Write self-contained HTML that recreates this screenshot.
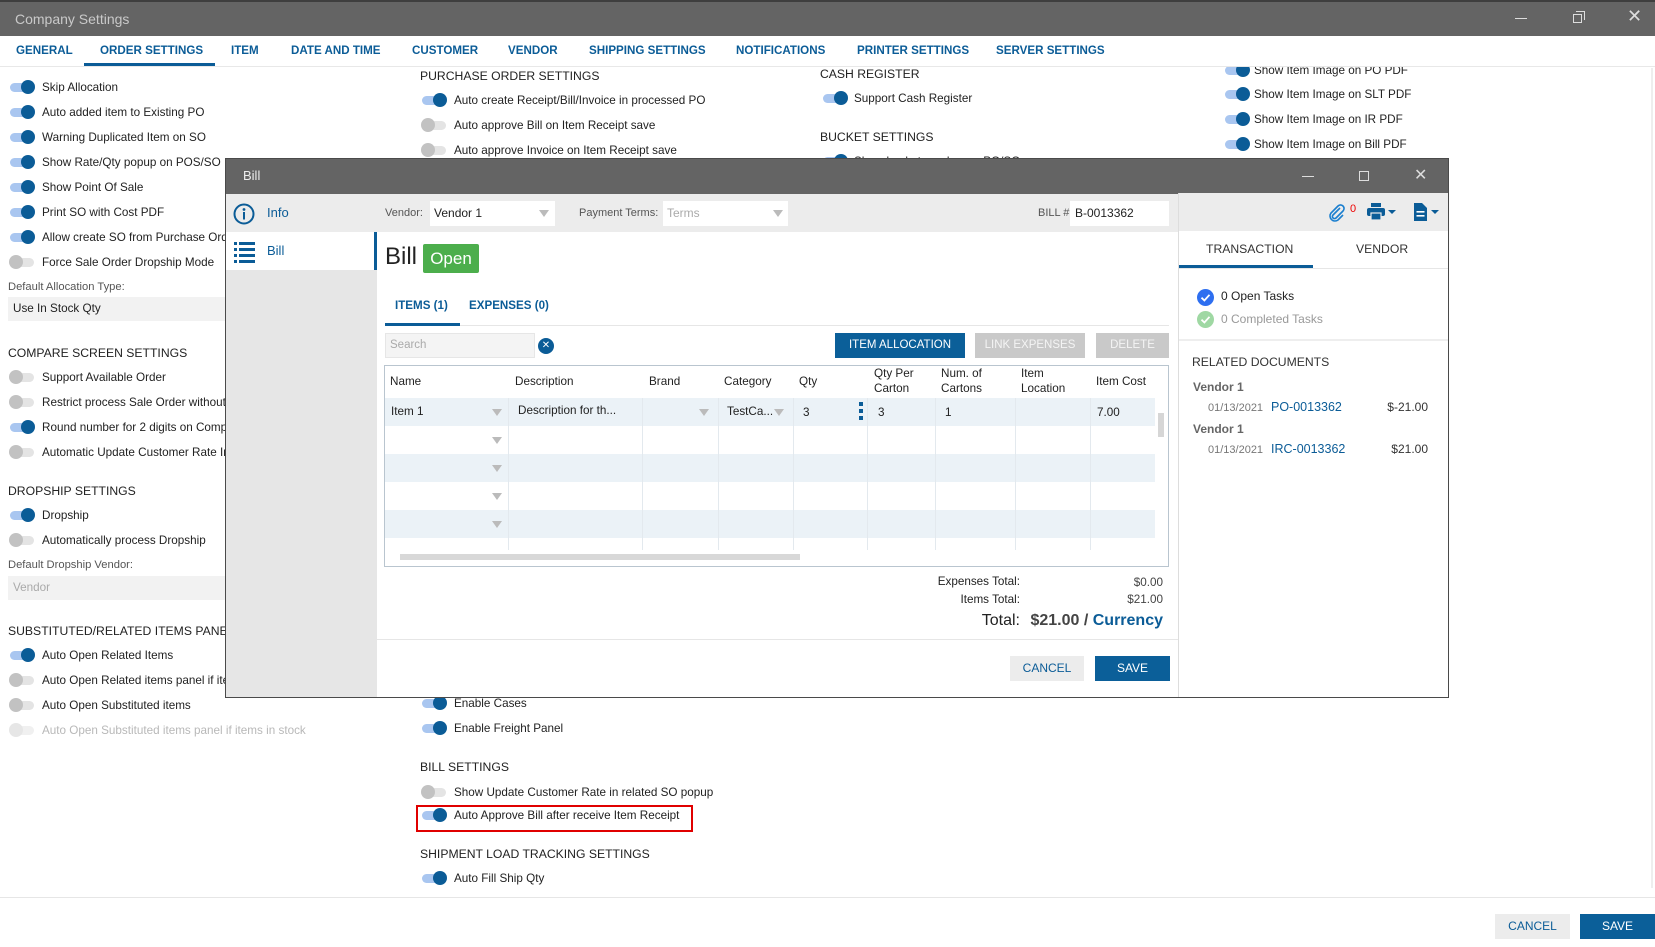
<!DOCTYPE html>
<html><head><meta charset="utf-8"><style>
*{box-sizing:border-box;margin:0;padding:0}
body{width:1655px;height:947px;position:relative;overflow:hidden;background:#fff;font-family:"Liberation Sans",sans-serif;font-size:12px;color:#222}
.a{position:absolute;white-space:nowrap}
.tg{position:absolute;width:26px;height:14px}
.tg:before{content:"";position:absolute;left:1px;top:3px;width:24px;height:9px;border-radius:5px;background:#e4e4e4}
.tg:after{content:"";position:absolute;left:0;top:0;width:14px;height:14px;border-radius:50%;background:#c2c2c2}
.tg.on:before{background:#a9c6f0}
.tg.on:after{left:12px;background:#0b5c97}
.tg.dis:before{background:#f0f0f0}.tg.dis:after{background:#e6e6e6}
.l{position:absolute;white-space:nowrap;font-size:11.7px;line-height:16px;color:#222}
.h{position:absolute;white-space:nowrap;font-size:12.2px;color:#222;line-height:16px}
.tab{position:absolute;top:44px;font-size:11.6px;font-weight:bold;color:#0b5c97;white-space:nowrap}
.blue{color:#0b5c97}
.btn{position:absolute;font-size:12px;text-align:center;line-height:25px;height:25px}
.row{position:absolute;left:385px;width:770px;height:28px}
.vd{position:absolute;top:398px;height:152px;width:1px;background:#e3e9ee}
.tri{position:absolute;width:0;height:0;border-left:5px solid transparent;border-right:5px solid transparent;border-top:7px solid #bbb}
</style></head><body>
<div class="a" style="left:0;top:0;width:1655px;height:36px;background:#646464;border-top:2px solid #3e3e3e"></div>
<div class="a" style="left:15px;top:11px;font-size:14px;color:#c9c9c9">Company Settings</div>
<div class="a" style="left:1515px;top:18px;width:12px;height:1px;background:#ddd"></div>
<div class="a" style="left:1573px;top:14px;width:9px;height:9px;border:1px solid #ddd"></div>
<div class="a" style="left:1576px;top:11px;width:9px;height:9px;border-top:1px solid #ddd;border-right:1px solid #ddd"></div>
<div class="a" style="left:1627px;top:6px;font-size:18px;color:#ddd">✕</div>
<div class="a" style="left:0;top:66px;width:1655px;height:1px;background:#e8e8e8"></div>
<div class="tab" style="left:16px">GENERAL</div>
<div class="tab" style="left:100px">ORDER SETTINGS</div>
<div class="a" style="left:84px;top:63px;width:131px;height:3px;background:#0b5c97"></div>
<div class="tab" style="left:231px">ITEM</div>
<div class="tab" style="left:291px">DATE AND TIME</div>
<div class="tab" style="left:412px">CUSTOMER</div>
<div class="tab" style="left:508px">VENDOR</div>
<div class="tab" style="left:589px">SHIPPING SETTINGS</div>
<div class="tab" style="left:736px">NOTIFICATIONS</div>
<div class="tab" style="left:857px">PRINTER SETTINGS</div>
<div class="tab" style="left:996px">SERVER SETTINGS</div>
<div class="a" style="left:1651px;top:68px;width:2px;height:820px;background:#eee"></div>

<div class="tg on" style="left:9px;top:80px"></div><div class="l" style="left:42px;top:80px">Skip Allocation</div>
<div class="tg on" style="left:9px;top:105px"></div><div class="l" style="left:42px;top:105px">Auto added item to Existing PO</div>
<div class="tg on" style="left:9px;top:130px"></div><div class="l" style="left:42px;top:130px">Warning Duplicated Item on SO</div>
<div class="tg on" style="left:9px;top:155px"></div><div class="l" style="left:42px;top:155px">Show Rate/Qty popup on POS/SO</div>
<div class="tg on" style="left:9px;top:180px"></div><div class="l" style="left:42px;top:180px">Show Point Of Sale</div>
<div class="tg on" style="left:9px;top:205px"></div><div class="l" style="left:42px;top:205px">Print SO with Cost PDF</div>
<div class="tg on" style="left:9px;top:230px"></div><div class="l" style="left:42px;top:230px">Allow create SO from Purchase Order</div>
<div class="tg" style="left:9px;top:255px"></div><div class="l" style="left:42px;top:255px">Force Sale Order Dropship Mode</div>
<div class="l" style="left:8px;top:279px;font-size:11.2px;color:#555">Default Allocation Type:</div>
<div class="a" style="left:8px;top:297px;width:220px;height:24px;background:#f2f2f2"></div>
<div class="l" style="left:13px;top:301px">Use In Stock Qty</div>
<div class="h" style="left:8px;top:345px">COMPARE SCREEN SETTINGS</div>
<div class="tg" style="left:9px;top:370px"></div><div class="l" style="left:42px;top:370px">Support Available Order</div>
<div class="tg" style="left:9px;top:395px"></div><div class="l" style="left:42px;top:395px">Restrict process Sale Order without stock</div>
<div class="tg on" style="left:9px;top:420px"></div><div class="l" style="left:42px;top:420px">Round number for 2 digits on Compare</div>
<div class="tg" style="left:9px;top:445px"></div><div class="l" style="left:42px;top:445px">Automatic Update Customer Rate In SO</div>
<div class="h" style="left:8px;top:483px">DROPSHIP SETTINGS</div>
<div class="tg on" style="left:9px;top:508px"></div><div class="l" style="left:42px;top:508px">Dropship</div>
<div class="tg" style="left:9px;top:533px"></div><div class="l" style="left:42px;top:533px">Automatically process Dropship</div>
<div class="l" style="left:8px;top:557px;font-size:11.2px;color:#555">Default Dropship Vendor:</div>
<div class="a" style="left:8px;top:576px;width:220px;height:24px;background:#f2f2f2"></div>
<div class="l" style="left:13px;top:580px;color:#aaa">Vendor</div>
<div class="h" style="left:8px;top:623px">SUBSTITUTED/RELATED ITEMS PANEL</div>
<div class="tg on" style="left:9px;top:648px"></div><div class="l" style="left:42px;top:648px">Auto Open Related Items</div>
<div class="tg" style="left:9px;top:673px"></div><div class="l" style="left:42px;top:673px">Auto Open Related items panel if items in stock</div>
<div class="tg" style="left:9px;top:698px"></div><div class="l" style="left:42px;top:698px">Auto Open Substituted items</div>
<div class="tg dis" style="left:9px;top:723px"></div><div class="l" style="left:42px;top:723px;color:#b8b8b8">Auto Open Substituted items panel if items in stock</div>

<div class="h" style="left:420px;top:68px">PURCHASE ORDER SETTINGS</div>
<div class="tg on" style="left:421px;top:93px"></div><div class="l" style="left:454px;top:93px">Auto create Receipt/Bill/Invoice in processed PO</div>
<div class="tg" style="left:421px;top:118px"></div><div class="l" style="left:454px;top:118px">Auto approve Bill on Item Receipt save</div>
<div class="tg" style="left:421px;top:143px"></div><div class="l" style="left:454px;top:143px">Auto approve Invoice on Item Receipt save</div>
<div class="tg on" style="left:421px;top:696px"></div><div class="l" style="left:454px;top:696px">Enable Cases</div>
<div class="tg on" style="left:421px;top:721px"></div><div class="l" style="left:454px;top:721px">Enable Freight Panel</div>
<div class="h" style="left:420px;top:759px">BILL SETTINGS</div>
<div class="tg" style="left:421px;top:785px"></div><div class="l" style="left:454px;top:785px">Show Update Customer Rate in related SO popup</div>
<div class="tg on" style="left:421px;top:808px"></div><div class="l" style="left:454px;top:808px">Auto Approve Bill after receive Item Receipt</div>
<div class="a" style="left:416px;top:805px;width:277px;height:27px;border:2px solid #e00000"></div>
<div class="h" style="left:420px;top:846px">SHIPMENT LOAD TRACKING SETTINGS</div>
<div class="tg on" style="left:421px;top:871px"></div><div class="l" style="left:454px;top:871px">Auto Fill Ship Qty</div>

<div class="h" style="left:820px;top:66px">CASH REGISTER</div>
<div class="tg on" style="left:822px;top:91px"></div><div class="l" style="left:854px;top:91px">Support Cash Register</div>
<div class="h" style="left:820px;top:129px">BUCKET SETTINGS</div>
<div class="tg on" style="left:822px;top:154px"></div><div class="l" style="left:854px;top:154px">Show bucket number on PO/SO</div>

<div class="a" style="left:1210px;top:67px;width:300px;height:96px;overflow:hidden">
<div class="tg on" style="left:14px;top:-4px"></div><div class="l" style="left:44px;top:-4px">Show Item Image on PO PDF</div>
<div class="tg on" style="left:14px;top:20px"></div><div class="l" style="left:44px;top:20px">Show Item Image on SLT PDF</div>
<div class="tg on" style="left:14px;top:45px"></div><div class="l" style="left:44px;top:45px">Show Item Image on IR PDF</div>
<div class="tg on" style="left:14px;top:70px"></div><div class="l" style="left:44px;top:70px">Show Item Image on Bill PDF</div>
</div>
<div class="tg on" style="left:1224px;top:162px"></div><div class="l" style="left:1254px;top:161px">Show Item Image on Receipt PDF</div>

<div class="a" style="left:0;top:897px;width:1655px;height:1px;background:#e6e6e6"></div>
<div class="btn" style="left:1495px;top:914px;width:75px;background:#ececec;color:#0b5c97">CANCEL</div>
<div class="btn" style="left:1580px;top:914px;width:75px;background:#0b5f99;color:#fff">SAVE</div>

<div class="a" style="left:225px;top:158px;width:1224px;height:540px;background:#fff;border:1px solid #4a4a4a;overflow:hidden">
<div class="a" style="left:0;top:0;width:1224px;height:35px;background:#646464"></div>
<div class="a" style="left:17px;top:9px;font-size:13px;color:#eee">Bill</div>
<div class="a" style="left:1076px;top:17px;width:12px;height:1px;background:#ddd"></div>
<div class="a" style="left:1133px;top:12px;width:10px;height:10px;border:1px solid #ddd"></div>
<div class="a" style="left:1188px;top:6px;font-size:16px;color:#ddd">✕</div>
<div class="a" style="left:0;top:35px;width:151px;height:505px;background:#e6e6e6"></div>
<div class="a" style="left:0;top:35px;width:151px;height:38px;background:#ececec"></div>
<div class="a" style="left:0;top:73px;width:151px;height:38px;background:#fff"></div>
<div class="a" style="left:148px;top:73px;width:3px;height:38px;background:#0b5c97"></div>
<svg class="a" style="left:7px;top:44px" width="22" height="22" viewBox="0 0 22 22"><circle cx="11" cy="11" r="9.5" fill="none" stroke="#0b5c97" stroke-width="2"/><circle cx="11" cy="6.5" r="1.4" fill="#0b5c97"/><rect x="10" y="9" width="2" height="7.5" fill="#0b5c97"/></svg>
<div class="a" style="left:41px;top:46px;font-size:13px;color:#0b5c97">Info</div>
<svg class="a" style="left:8px;top:82px" width="22" height="22" viewBox="0 0 22 22" fill="#0b5c97"><rect x="0" y="1" width="3" height="3"/><rect x="5" y="1" width="16" height="3"/><rect x="0" y="7" width="3" height="3"/><rect x="5" y="7" width="16" height="3"/><rect x="0" y="13" width="3" height="3"/><rect x="5" y="13" width="16" height="3"/><rect x="0" y="19" width="3" height="3"/><rect x="5" y="19" width="16" height="3"/></svg>
<div class="a" style="left:41px;top:84px;font-size:13px;color:#0b5c97">Bill</div>
<div class="a" style="left:151px;top:35px;width:802px;height:38px;background:#ececec"></div>
<div class="a" style="left:159px;top:48px;font-size:11px;color:#555">Vendor:</div>
<div class="a" style="left:204px;top:42px;width:125px;height:25px;background:#fff"></div>
<div class="a" style="left:208px;top:47px;font-size:12px">Vendor 1</div>
<div class="tri" style="left:313px;top:51px"></div>
<div class="a" style="left:353px;top:48px;font-size:11px;color:#555">Payment Terms:</div>
<div class="a" style="left:437px;top:42px;width:125px;height:25px;background:#fff"></div>
<div class="a" style="left:441px;top:47px;font-size:12px;color:#aaa">Terms</div>
<div class="tri" style="left:547px;top:51px"></div>
<div class="a" style="left:812px;top:48px;font-size:11px;color:#555">BILL #</div>
<div class="a" style="left:844px;top:42px;width:99px;height:25px;background:#fff"></div>
<div class="a" style="left:849px;top:47px;font-size:12px">B-0013362</div>
<div class="a" style="left:159px;top:84px;font-size:24px;color:#222">Bill</div>
<div class="a" style="left:197px;top:85px;width:56px;height:29px;background:#4cae4c;border-radius:2px;color:#fff;font-size:17px;text-align:center;line-height:29px">Open</div>
<div class="a" style="left:169px;top:140px;font-size:11.6px;font-weight:bold;color:#0b5c97">ITEMS (1)</div>
<div class="a" style="left:243px;top:140px;font-size:11.6px;font-weight:bold;color:#0b5c97">EXPENSES (0)</div>
<div class="a" style="left:159px;top:166px;width:784px;height:1px;background:#e6e6e6"></div>
<div class="a" style="left:159px;top:164px;width:75px;height:3px;background:#0b5c97"></div>
<div class="a" style="left:159px;top:174px;width:150px;height:25px;background:#f4f4f4;border:1px solid #e6e6e6"></div>
<div class="a" style="left:164px;top:180px;font-size:11.5px;color:#aaa">Search</div>
<div class="a" style="left:312px;top:179px;width:16px;height:16px;border-radius:50%;background:#0b5c97;color:#fff;font-size:10px;text-align:center;line-height:16px">✕</div>
<div class="btn" style="left:609px;top:174px;width:130px;background:#0b5f99;color:#fff;font-size:11.5px">ITEM ALLOCATION</div>
<div class="btn" style="left:749px;top:174px;width:110px;background:#c9c9c9;color:#f4f4f4;font-size:11.5px">LINK EXPENSES</div>
<div class="btn" style="left:870px;top:174px;width:73px;background:#c9c9c9;color:#f4f4f4;font-size:11.5px">DELETE</div>
</div>
<div class="a" style="left:384px;top:365px;width:785px;height:202px;border:1px solid #b9c5cf;background:#fff"></div>
<div class="l" style="left:390px;top:374px">Name</div>
<div class="l" style="left:515px;top:374px">Description</div>
<div class="l" style="left:649px;top:374px">Brand</div>
<div class="l" style="left:724px;top:374px">Category</div>
<div class="l" style="left:799px;top:374px">Qty</div>
<div class="l" style="left:874px;top:366px;line-height:15px">Qty Per<br>Carton</div>
<div class="l" style="left:941px;top:366px;line-height:15px">Num. of<br>Cartons</div>
<div class="l" style="left:1021px;top:366px;line-height:15px">Item<br>Location</div>
<div class="l" style="left:1096px;top:374px">Item Cost</div>
<div class="row" style="top:398px;background:#ebf2f7"></div>
<div class="row" style="top:454px;background:#ebf2f7"></div>
<div class="row" style="top:510px;background:#ebf2f7"></div>
<div class="vd" style="left:508px"></div><div class="vd" style="left:642px"></div><div class="vd" style="left:718px"></div><div class="vd" style="left:793px"></div><div class="vd" style="left:867px"></div><div class="vd" style="left:935px"></div><div class="vd" style="left:1015px"></div><div class="vd" style="left:1090px"></div>
<div class="l" style="left:391px;top:404px">Item 1</div>
<div class="tri" style="left:492px;top:409px"></div>
<div class="l" style="left:518px;top:403px">Description for th...</div>
<div class="tri" style="left:699px;top:409px"></div>
<div class="l" style="left:727px;top:404px">TestCa...</div>
<div class="tri" style="left:774px;top:409px"></div>
<div class="l" style="left:803px;top:405px">3</div>
<div class="a" style="left:859px;top:402px;width:4px;height:4px;background:#0b5c97"></div>
<div class="a" style="left:859px;top:409px;width:4px;height:4px;background:#0b5c97"></div>
<div class="a" style="left:859px;top:416px;width:4px;height:4px;background:#0b5c97"></div>
<div class="l" style="left:878px;top:405px">3</div>
<div class="l" style="left:945px;top:405px">1</div>
<div class="l" style="left:1097px;top:405px">7.00</div>
<div class="tri" style="left:492px;top:437px"></div>
<div class="tri" style="left:492px;top:465px"></div>
<div class="tri" style="left:492px;top:493px"></div>
<div class="tri" style="left:492px;top:521px"></div>
<div class="a" style="left:1158px;top:413px;width:6px;height:24px;background:#d6d6d6"></div>
<div class="a" style="left:400px;top:554px;width:400px;height:6px;background:#d8d8d8"></div>
<div class="a" style="left:880px;top:575px;width:140px;text-align:right;font-size:11.7px">Expenses Total:</div>
<div class="a" style="left:1080px;top:576px;width:83px;text-align:right;font-size:11.7px;color:#444">$0.00</div>
<div class="a" style="left:880px;top:593px;width:140px;text-align:right;font-size:11.7px">Items Total:</div>
<div class="a" style="left:1080px;top:593px;width:83px;text-align:right;font-size:11.7px;color:#444">$21.00</div>
<div class="a" style="left:900px;top:612px;width:120px;text-align:right;font-size:16px">Total:</div>
<div class="a" style="left:1000px;top:612px;width:163px;text-align:right;font-size:16px;font-weight:bold;color:#444">$21.00 / <span class="blue">Currency</span></div>
<div class="a" style="left:376px;top:639px;width:802px;height:1px;background:#e6e6e6"></div>
<div class="btn" style="left:1010px;top:656px;width:74px;background:#ececec;color:#0b5c97">CANCEL</div>
<div class="btn" style="left:1095px;top:656px;width:75px;background:#0b5f99;color:#fff">SAVE</div>
<div class="a" style="left:1178px;top:193px;width:1px;height:504px;background:#ddd"></div>
<div class="a" style="left:1179px;top:193px;width:269px;height:38px;background:#ececec"></div>
<svg class="a" style="left:1326px;top:202px" width="20" height="20" viewBox="0 0 20 20"><path d="M14 6 L7 13 a2 2 0 0 0 3 3 L17 9 a3.5 3.5 0 0 0 -5 -5 L5 11 a5 5 0 0 0 7 7 L17 13" fill="none" stroke="#1b7fcf" stroke-width="1.6"/></svg>
<div class="a" style="left:1350px;top:203px;font-size:11px;color:#e00">0</div>
<svg class="a" style="left:1367px;top:203px" width="32" height="18" viewBox="0 0 32 18" fill="#0b5c97"><rect x="4" y="0" width="10" height="4"/><rect x="0" y="5" width="18" height="8" rx="2"/><rect x="4" y="10" width="10" height="7" fill="#0b5c97" stroke="#ececec" stroke-width="1.2"/><path d="M21 7 h8 l-4 4z"/></svg>
<svg class="a" style="left:1413px;top:202px" width="30" height="20" viewBox="0 0 30 20" fill="#0b5c97"><path d="M1 1 h8 l5 5 v13 h-13z"/><rect x="3.5" y="9" width="8" height="1.6" fill="#fff"/><rect x="3.5" y="13" width="8" height="1.6" fill="#fff"/><path d="M18 8 h8 l-4 4z"/></svg>
<div class="a" style="left:1179px;top:268px;width:269px;height:1px;background:#e6e6e6"></div>
<div class="a" style="left:1179px;top:265px;width:134px;height:3px;background:#0b5c97"></div>
<div class="a" style="left:1206px;top:242px;font-size:12.2px;color:#333">TRANSACTION</div>
<div class="a" style="left:1356px;top:242px;font-size:12.2px;color:#333">VENDOR</div>
<svg class="a" style="left:1197px;top:289px" width="17" height="17" viewBox="0 0 17 17"><circle cx="8.5" cy="8.5" r="8.5" fill="#2e6ff0"/><path d="M4.5 8.7 L7.4 11.5 L12.5 5.8" fill="none" stroke="#fff" stroke-width="1.8"/></svg>
<div class="a" style="left:1221px;top:289px;font-size:12px;color:#222">0 Open Tasks</div>
<svg class="a" style="left:1197px;top:311px" width="17" height="17" viewBox="0 0 17 17"><circle cx="8.5" cy="8.5" r="8.5" fill="#9fd8a3"/><path d="M4.5 8.7 L7.4 11.5 L12.5 5.8" fill="none" stroke="#fff" stroke-width="1.8"/></svg>
<div class="a" style="left:1221px;top:312px;font-size:12px;color:#999">0 Completed Tasks</div>
<div class="a" style="left:1179px;top:339px;width:269px;height:2px;background:#eee"></div>
<div class="a" style="left:1192px;top:355px;font-size:12.2px;color:#333">RELATED DOCUMENTS</div>
<div class="a" style="left:1193px;top:380px;font-size:12px;font-weight:bold;color:#666">Vendor 1</div>
<div class="a" style="left:1208px;top:402px;font-size:11px;color:#777">01/13/2021</div>
<div class="a" style="left:1271px;top:400px;font-size:12.5px;color:#0b5c97">PO-0013362</div>
<div class="a" style="left:1348px;top:400px;width:80px;text-align:right;font-size:12px;color:#333">$-21.00</div>
<div class="a" style="left:1193px;top:422px;font-size:12px;font-weight:bold;color:#666">Vendor 1</div>
<div class="a" style="left:1208px;top:444px;font-size:11px;color:#777">01/13/2021</div>
<div class="a" style="left:1271px;top:442px;font-size:12.5px;color:#0b5c97">IRC-0013362</div>
<div class="a" style="left:1348px;top:442px;width:80px;text-align:right;font-size:12px;color:#333">$21.00</div>
</body></html>
